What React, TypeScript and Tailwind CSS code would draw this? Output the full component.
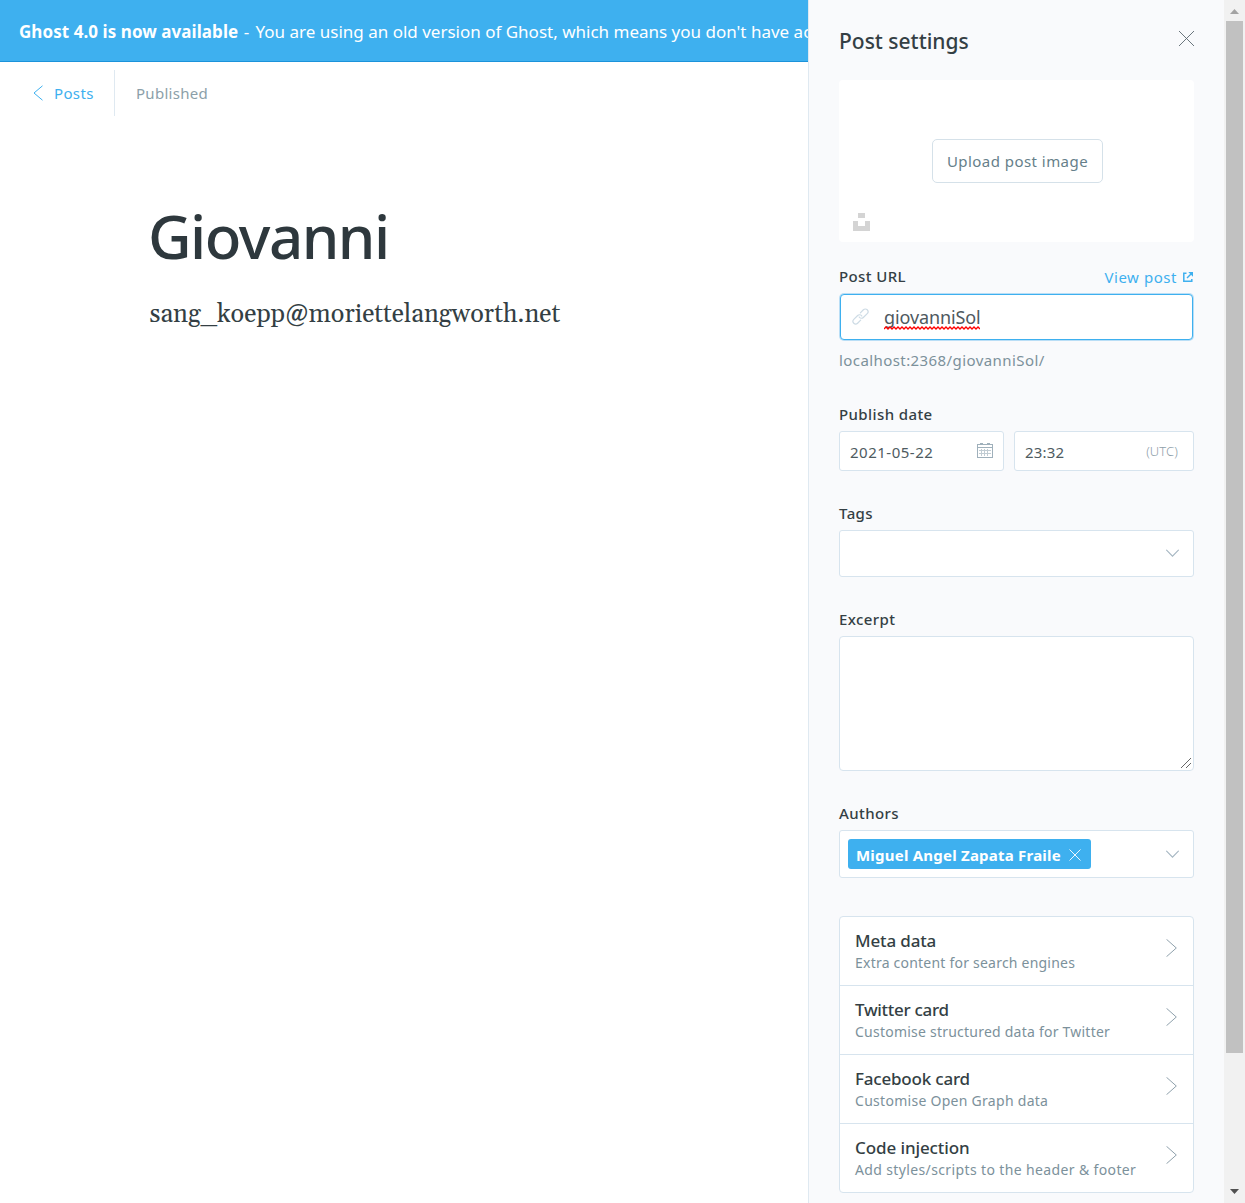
import type { ReactNode } from 'react';

function Label({ children }: { children: ReactNode }) {
  return <div className="h-6 text-[15px] leading-6 font-medium tracking-[0.4px] text-[#343f44]">{children}</div>;
}

function ChevronDown() {
  return (
    <svg className="-mt-px h-2 w-[13px] shrink-0" viewBox="0 0 13 8" fill="none" stroke="#a5b6c2" strokeWidth="1.1" strokeLinecap="round">
      <path d="M.6 1.200 6.500 7.100 12.400 1.200" />
    </svg>
  );
}

function LinkIcon() {
  return (
    <svg className="-mt-px h-[17px] w-[17px] shrink-0" viewBox="0 0 17 17" fill="none" stroke="#cddbe5" strokeWidth="1.2" strokeLinecap="round">
      <g transform="rotate(-45 8.5 8.5)">
        <path d="M6 11.2H1.700a2.700 2.700 0 0 1 0-5.400H7.200a2.700 2.700 0 0 1 2.600 3.300" />
        <path d="M11 5.800h4.300a2.700 2.700 0 0 1 0 5.400H9.800a2.700 2.700 0 0 1-2.600-3.300" />
      </g>
    </svg>
  );
}

function CalendarIcon() {
  return (
    <svg className="-mt-0.5 h-4 w-4 shrink-0" viewBox="0 0 16 16" fill="none" stroke="#9fb0bb" strokeWidth="1" shapeRendering="crispEdges">
      <path d="M.5 2.5h15v12.5H.5zM.5 5.5h15" />
      <path d="M2 8.5h12M2 11.5h12M4.5 7v7M7.5 7v7M10.5 7v7" opacity=".65" />
      <path d="M3 1.5h3M10 1.5h3" />
    </svg>
  );
}

const cards = [
  { title: 'Meta data', titleStyle: 'tracking-[-0.15px]', text: 'Extra content for search engines', textStyle: 'tracking-[0.22px]' },
  { title: 'Twitter card', titleStyle: 'tracking-[-0.3px]', text: 'Customise structured data for Twitter', textStyle: 'tracking-[0.23px]' },
  { title: 'Facebook card', titleStyle: 'tracking-[-0.2px]', text: 'Customise Open Graph data', textStyle: 'tracking-[0.28px]' },
  { title: 'Code injection', titleStyle: 'tracking-[-0.1px]', text: 'Add styles/scripts to the header & footer', textStyle: 'tracking-[0.37px]' },
];

export default function App() {
  return (
    <div className="flex h-[1203px] w-[1245px] overflow-hidden bg-white font-['Noto_Sans','Open_Sans',sans-serif]">
      <main className="w-[808px] shrink-0 overflow-hidden">
        <div className="h-[62px] overflow-hidden border-b border-[#1c93da] bg-[#3eb0ef] pl-[19px] text-[17px] leading-[63px] whitespace-nowrap text-white">
          <b className="tracking-[0.06px]">Ghost 4.0 is now available</b>
          <span className="mr-0.5 ml-px"> - </span>
          <span>You are using an old version of Ghost, which means you don't have ac</span>
        </div>
        <div className="mt-2 flex h-[46px] items-center text-[15px] tracking-[0.35px]">
          <div className="flex h-full w-[115px] items-center border-r border-[#dfe9f1] pl-[33px] text-[#3eb0ef]">
            <svg className="mr-[11px] h-4 w-[10px]" viewBox="0 0 10 16" fill="none" stroke="currentColor" strokeWidth="1">
              <path d="M9.5 .8 1 8l8.500 7.200" />
            </svg>
            Posts
          </div>
          <div className="pl-[21px] tracking-[0.28px] text-[#8c9fa9]">Published</div>
        </div>
        <h1 className="mt-[78px] ml-[148px] h-[84px] text-[60px] leading-[84px] font-medium tracking-[-1.5px] text-[#2e383d]">Giovanni</h1>
        <p className="mt-[19px] ml-[149.5px] h-9 font-['Gelasio','Liberation_Serif',serif] text-[25.2px] leading-9 tracking-[0.02px] text-[#343f44]">
          sang_koepp@moriettelangworth.net
        </p>
      </main>

      <aside className="flex w-[416px] shrink-0 flex-col border-l border-[#dfe9f1] bg-[#f9fafc] pr-[30px] pl-[30px]">
        <div className="flex h-20 items-start justify-between">
          <h2 className="mt-[27px] text-[21px] leading-7 font-medium text-[#343f44]">Post settings</h2>
          <svg className="mt-[31px] h-[15px] w-[15px]" viewBox="0 0 15 15" fill="none" stroke="#5a676e" strokeWidth="0.9">
            <path d="m0 0 15 15M15 0 0 15" />
          </svg>
        </div>

        <div className="relative flex h-[162px] shrink-0 items-center justify-center rounded bg-white">
          <button className="ml-[2px] h-11 w-[171px] rounded-[5px] border border-[#d5e1e9] pt-px text-[15px] tracking-[0.45px] text-[#667f8a]">Upload post image</button>
          <svg className="absolute bottom-[11px] left-[14px] h-[18px] w-[17px]" viewBox="0 0 17 18" fill="#d4d4d4" shapeRendering="crispEdges">
            <path d="M5 0h7v5H5zM0 8h5v5h7V8h5v10H0z" />
          </svg>
        </div>

        <div className="mt-[22px] flex h-[29px] shrink-0 justify-between">
          <Label>Post URL</Label>
          <div className="mr-px flex h-[26px] items-center text-[15px] tracking-[0.55px] text-[#3eb0ef]">
            View post
            <svg className="ml-1.5 h-[10px] w-[10px]" viewBox="0 0 10 10" fill="none" stroke="currentColor" strokeWidth="1.5">
              <path d="M3.500 1.2H.8v8h8V7" />
              <path d="M4 6 8 2" />
              <path d="M5.300 0H10v4.700z" fill="currentColor" stroke="none" />
            </svg>
          </div>
        </div>
        <div className="mx-px mt-px flex h-[46px] shrink-0 items-center rounded border border-[#3eb0ef] bg-white pl-[11px] shadow-[0_0_0_1px_#b9def6]">
          <LinkIcon />
          <div className="relative ml-[15px] text-[18px] leading-6 tracking-[-0.12px] text-[#4e595f]">
            giovanniSol
            <svg className="absolute top-[21px] left-0 h-1 w-[96px]" viewBox="0 0 96 4" fill="none" stroke="#f00" strokeWidth="1.3">
              <path d={'M0 3' + 'l2 -2l2 2'.repeat(24)} />
            </svg>
          </div>
        </div>
        <div className="mt-2 h-6 shrink-0 text-[15px] leading-6 tracking-[0.42px] text-[#7c919b]">localhost:2368/giovanniSol/</div>

        <div className="mt-[30px] shrink-0">
          <Label>Publish date</Label>
          <div className="mt-[5px] flex gap-[10px]">
            <div className="flex h-10 w-[165px] items-center justify-between rounded-[3px] border border-[#d7e4ee] bg-white pr-[10px] pl-[10px] text-[15px] tracking-[0.5px] text-[#4e5b61]">
              <span className="pt-0.5">2021-05-22</span>
              <CalendarIcon />
            </div>
            <div className="flex h-10 flex-1 items-center justify-between rounded-[3px] border border-[#d7e4ee] bg-white pr-[15px] pl-[10px] text-[15px] tracking-[0.2px] text-[#4e5b61]">
              <span className="pt-0.5">23:32</span>
              <span className="pt-0.5 text-[13px] font-light tracking-[0.1px] text-[#8fa0aa]">(UTC)</span>
            </div>
          </div>
        </div>

        <div className="mt-[30px] shrink-0">
          <Label>Tags</Label>
          <div className="mt-[5px] flex h-[47px] items-center justify-end rounded-[3px] border border-[#d7e4ee] bg-white pr-[14px]">
            <ChevronDown />
          </div>
        </div>

        <div className="mt-[30px] shrink-0">
          <Label>Excerpt</Label>
          <div className="mt-[5px] flex h-[135px] items-end justify-end rounded-[4px] border border-[#d7e4ee] bg-white pr-[2px] pb-[2px]">
            <svg className="h-[10px] w-[10px]" viewBox="0 0 10 10" stroke="#555" strokeWidth="0.9">
              <path d="M0 10 10 0M5 10l5-5" />
            </svg>
          </div>
        </div>

        <div className="mt-[30px] shrink-0">
          <Label>Authors</Label>
          <div className="mt-[5px] flex h-12 items-center justify-between rounded-[3px] border border-[#d7e4ee] bg-white pr-[14px] pl-2">
            <div className="flex h-[30px] w-[243px] items-center rounded-[3px] bg-[#3eb0ef] pl-2 text-[15px] font-bold tracking-[0.22px] whitespace-nowrap text-white">
              <span className="pt-0.5">Miguel Angel Zapata Fraile</span>
              <svg className="mt-[2px] ml-2 h-3 w-3" viewBox="0 0 12 12" fill="none" stroke="#fff" strokeWidth="0.9">
                <path d="m.5 .5 11 11M11.500 .5l-11 11" />
              </svg>
            </div>
            <ChevronDown />
          </div>
        </div>

        <div className="mt-[38px] shrink-0 divide-y divide-[#d7e4ee] rounded-[4px] border border-[#d7e4ee] bg-white">
          {cards.map((card) => (
            <div key={card.title} className="flex h-[69px] items-start justify-between pr-4 pl-[15px] last:h-[68px]">
              <div className="pt-3">
                <div className={'h-6 text-[17px] leading-6 font-medium text-[#343f44] ' + card.titleStyle}>{card.title}</div>
                <div className={'h-5 text-[14px] leading-5 text-[#7c919b] ' + card.textStyle}>{card.text}</div>
              </div>
              <svg className="mt-[22px] h-[18px] w-[11px]" viewBox="0 0 11 18" fill="none" stroke="#8fa1ac" strokeWidth="1">
                <path d="M.5 .3 10.300 9 .5 17.700" />
              </svg>
            </div>
          ))}
        </div>
      </aside>

      <div className="flex w-[21px] flex-col items-center justify-between bg-[#f1f1f1]">
        <div className="flex flex-col items-center">
          <svg className="mt-[9px] h-[5px] w-[9px]" viewBox="0 0 9 5" fill="#a3a3a3"><path d="M4.500 0 9 5H0z" /></svg>
          <div className="mt-[7px] h-[1032px] w-[17px] bg-[#c1c1c1]" />
        </div>
        <svg className="mb-[9px] h-[5px] w-[9px]" viewBox="0 0 9 5" fill="#505050"><path d="M0 0h9L4.500 5z" /></svg>
      </div>
    </div>
  );
}
